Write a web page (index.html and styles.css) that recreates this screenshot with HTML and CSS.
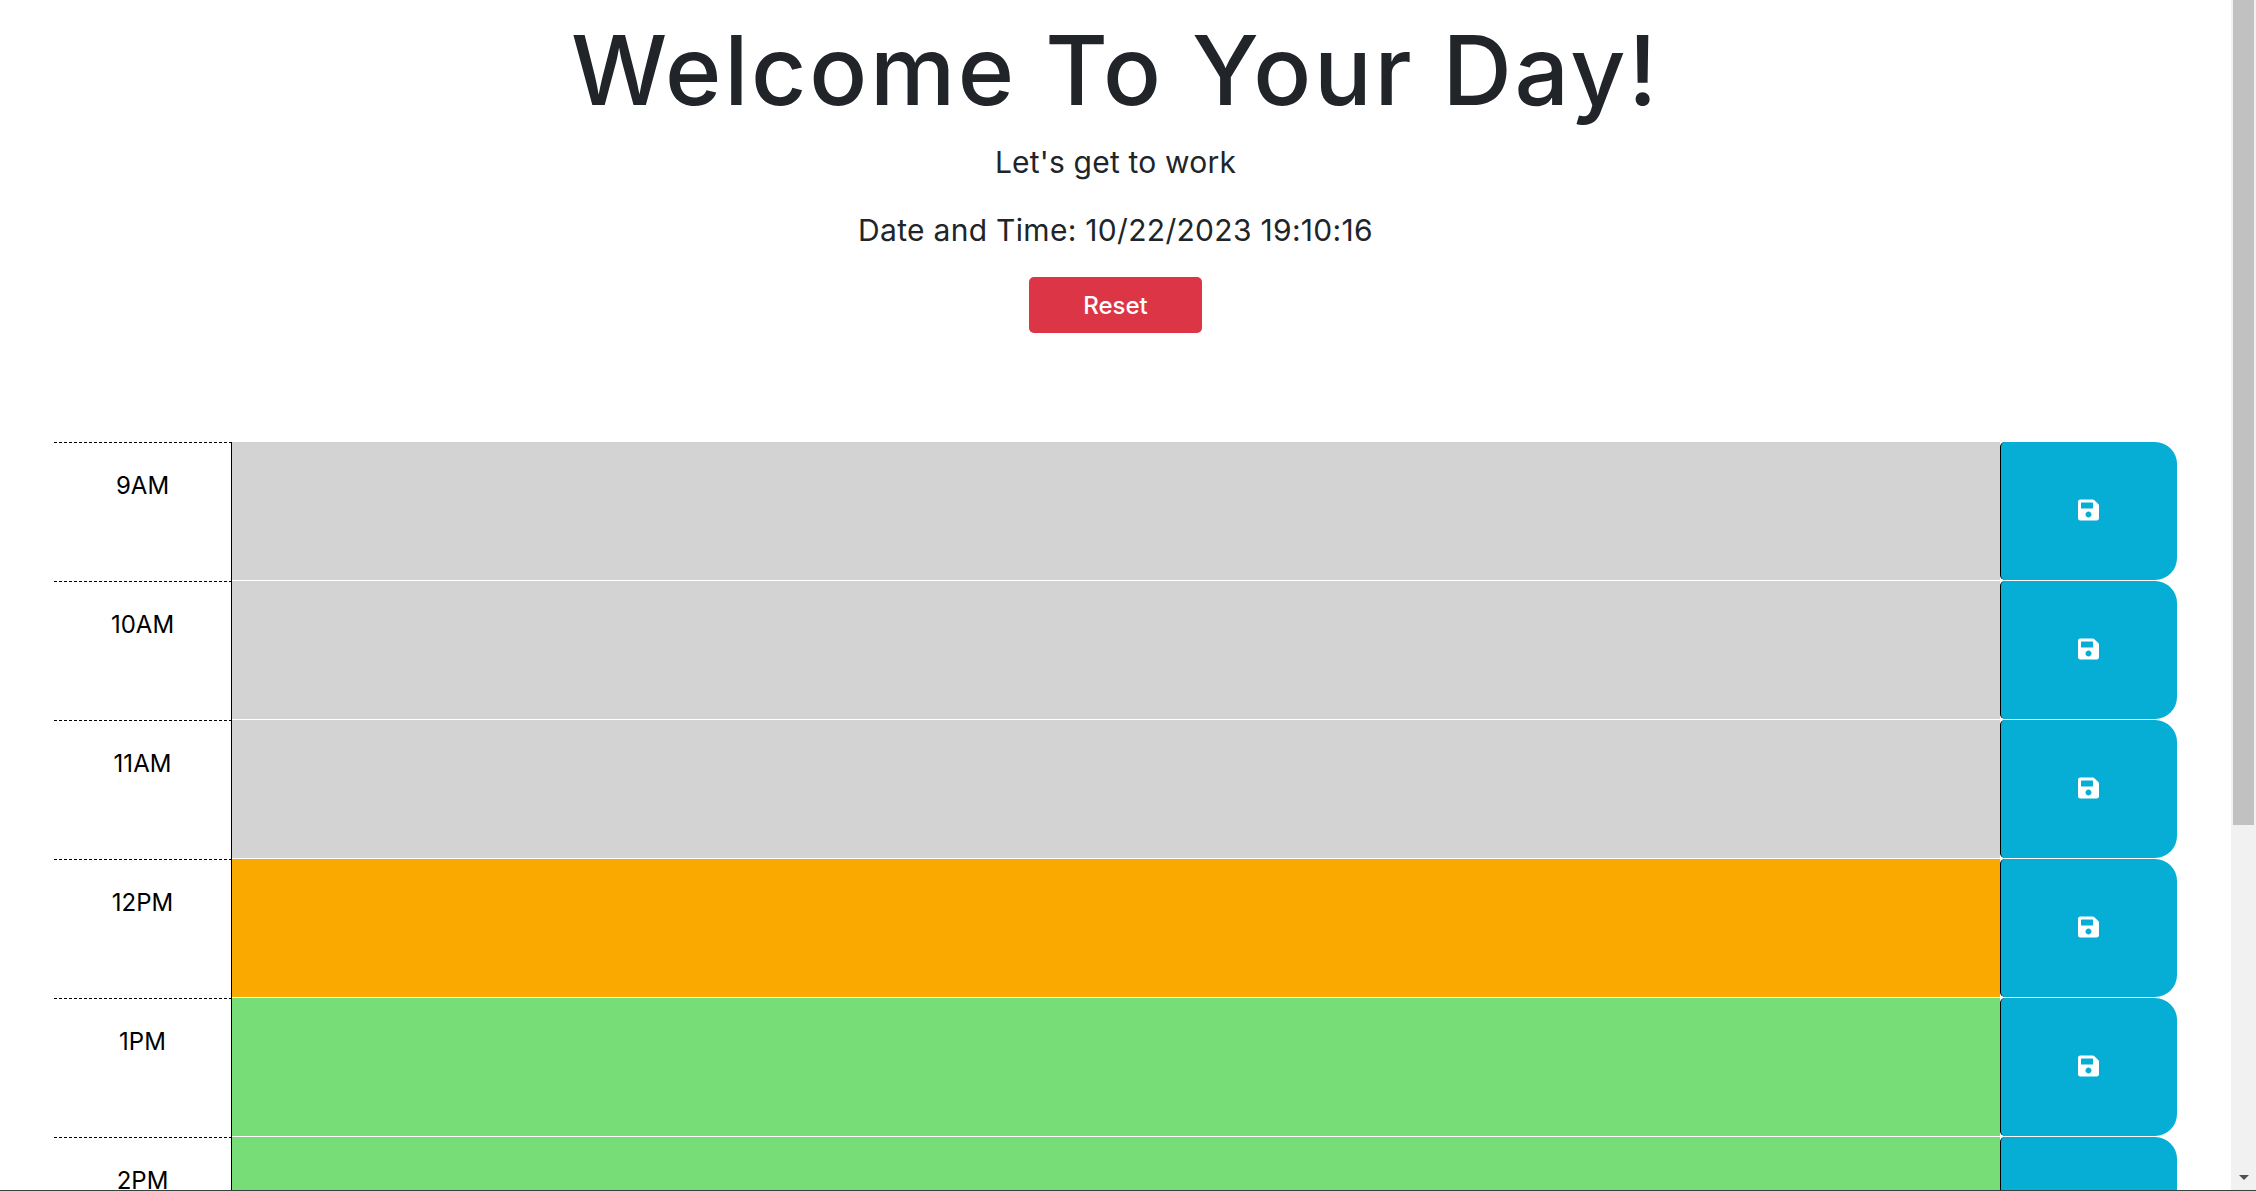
FILE: index.html
```html
<!DOCTYPE html>
<html lang="en">
<head>
    <meta charset="UTF-8">
    <meta name="viewport" content="width=device-width, initial-scale=1.0">
    <title>Work Day Scheduler</title>
    <link rel="stylesheet" href="styles.css">
</head>
<body>
    <div class="page">
        <header class="jumbotron">
            <h1>Welcome To Your Day!</h1>
            <p class="lead">Let's get to work</p>
            <p class="lead clock">Date and Time: 10/22/2023 19:10:16</p>
            <button class="reset-btn">Reset</button>
        </header>

        <div class="schedule">
            <div class="time-block">
                <div class="hour">9AM</div>
                <textarea class="description past"></textarea>
                <button class="save-btn"><svg class="save-icon" viewBox="0 0 448 512"><path d="M433.941 129.941l-83.882-83.882A48 48 0 0 0 316.118 32H48C21.49 32 0 53.49 0 80v352c0 26.51 21.49 48 48 48h352c26.51 0 48-21.49 48-48V163.882a48 48 0 0 0-14.059-33.941zM224 416c-35.346 0-64-28.654-64-64 0-35.346 28.654-64 64-64s64 28.654 64 64c0 35.346-28.654 64-64 64zm96-304.52V212c0 6.627-5.373 12-12 12H76c-6.627 0-12-5.373-12-12V108c0-6.627 5.373-12 12-12h228.52c3.183 0 6.235 1.264 8.485 3.515l3.48 3.48A11.996 11.996 0 0 1 320 111.48z"/></svg></button>
            </div>
            <div class="time-block">
                <div class="hour">10AM</div>
                <textarea class="description past"></textarea>
                <button class="save-btn"><svg class="save-icon" viewBox="0 0 448 512"><path d="M433.941 129.941l-83.882-83.882A48 48 0 0 0 316.118 32H48C21.49 32 0 53.49 0 80v352c0 26.51 21.49 48 48 48h352c26.51 0 48-21.49 48-48V163.882a48 48 0 0 0-14.059-33.941zM224 416c-35.346 0-64-28.654-64-64 0-35.346 28.654-64 64-64s64 28.654 64 64c0 35.346-28.654 64-64 64zm96-304.52V212c0 6.627-5.373 12-12 12H76c-6.627 0-12-5.373-12-12V108c0-6.627 5.373-12 12-12h228.52c3.183 0 6.235 1.264 8.485 3.515l3.48 3.48A11.996 11.996 0 0 1 320 111.48z"/></svg></button>
            </div>
            <div class="time-block">
                <div class="hour">11AM</div>
                <textarea class="description past"></textarea>
                <button class="save-btn"><svg class="save-icon" viewBox="0 0 448 512"><path d="M433.941 129.941l-83.882-83.882A48 48 0 0 0 316.118 32H48C21.49 32 0 53.49 0 80v352c0 26.51 21.49 48 48 48h352c26.51 0 48-21.49 48-48V163.882a48 48 0 0 0-14.059-33.941zM224 416c-35.346 0-64-28.654-64-64 0-35.346 28.654-64 64-64s64 28.654 64 64c0 35.346-28.654 64-64 64zm96-304.52V212c0 6.627-5.373 12-12 12H76c-6.627 0-12-5.373-12-12V108c0-6.627 5.373-12 12-12h228.52c3.183 0 6.235 1.264 8.485 3.515l3.48 3.48A11.996 11.996 0 0 1 320 111.48z"/></svg></button>
            </div>
            <div class="time-block">
                <div class="hour">12PM</div>
                <textarea class="description present"></textarea>
                <button class="save-btn"><svg class="save-icon" viewBox="0 0 448 512"><path d="M433.941 129.941l-83.882-83.882A48 48 0 0 0 316.118 32H48C21.49 32 0 53.49 0 80v352c0 26.51 21.49 48 48 48h352c26.51 0 48-21.49 48-48V163.882a48 48 0 0 0-14.059-33.941zM224 416c-35.346 0-64-28.654-64-64 0-35.346 28.654-64 64-64s64 28.654 64 64c0 35.346-28.654 64-64 64zm96-304.52V212c0 6.627-5.373 12-12 12H76c-6.627 0-12-5.373-12-12V108c0-6.627 5.373-12 12-12h228.52c3.183 0 6.235 1.264 8.485 3.515l3.48 3.48A11.996 11.996 0 0 1 320 111.48z"/></svg></button>
            </div>
            <div class="time-block">
                <div class="hour">1PM</div>
                <textarea class="description future"></textarea>
                <button class="save-btn"><svg class="save-icon" viewBox="0 0 448 512"><path d="M433.941 129.941l-83.882-83.882A48 48 0 0 0 316.118 32H48C21.49 32 0 53.49 0 80v352c0 26.51 21.49 48 48 48h352c26.51 0 48-21.49 48-48V163.882a48 48 0 0 0-14.059-33.941zM224 416c-35.346 0-64-28.654-64-64 0-35.346 28.654-64 64-64s64 28.654 64 64c0 35.346-28.654 64-64 64zm96-304.52V212c0 6.627-5.373 12-12 12H76c-6.627 0-12-5.373-12-12V108c0-6.627 5.373-12 12-12h228.52c3.183 0 6.235 1.264 8.485 3.515l3.48 3.48A11.996 11.996 0 0 1 320 111.48z"/></svg></button>
            </div>
            <div class="time-block">
                <div class="hour">2PM</div>
                <textarea class="description future"></textarea>
                <button class="save-btn"><svg class="save-icon" viewBox="0 0 448 512"><path d="M433.941 129.941l-83.882-83.882A48 48 0 0 0 316.118 32H48C21.49 32 0 53.49 0 80v352c0 26.51 21.49 48 48 48h352c26.51 0 48-21.49 48-48V163.882a48 48 0 0 0-14.059-33.941zM224 416c-35.346 0-64-28.654-64-64 0-35.346 28.654-64 64-64s64 28.654 64 64c0 35.346-28.654 64-64 64zm96-304.52V212c0 6.627-5.373 12-12 12H76c-6.627 0-12-5.373-12-12V108c0-6.627 5.373-12 12-12h228.52c3.183 0 6.235 1.264 8.485 3.515l3.48 3.48A11.996 11.996 0 0 1 320 111.48z"/></svg></button>
            </div>
        </div>
    </div>

    <div class="scrollbar">
        <div class="scroll-thumb"></div>
        <div class="scroll-track"></div>
        <div class="scroll-arrow"></div>
    </div>
</body>
</html>
```

FILE: styles.css
```css
html, body {
    height: 100%;
    margin: 0;
    overflow: hidden;
}
body {
    display: flex;
    font-family: Inter, "Liberation Sans", sans-serif;
    color: #212529;
    background-color: #fff;
    border-bottom: 1px solid #3c4043;
    box-sizing: border-box;
}
.page {
    flex: 1;
    min-width: 0;
    overflow: hidden;
}
.jumbotron {
    height: 442px;
    box-sizing: border-box;
    padding-top: 8px;
    text-align: center;
}
h1 {
    margin: 0 0 8px;
    font-size: 96px;
    font-weight: 500;
    line-height: 124px;
    letter-spacing: 2.7px;
}
.lead {
    margin: 0 0 24px;
    font-size: 30px;
    line-height: 44px;
    letter-spacing: 0.2px;
}
.clock {
    margin-bottom: 25px;
    letter-spacing: 0.3px;
}
.reset-btn {
    width: 173px;
    height: 56px;
    border: none;
    border-radius: 5px;
    background-color: #dc3545;
    color: #fff;
    font-family: inherit;
    font-size: 24px;
    font-weight: 500;
}
.schedule {
    margin: 0 54px;
}
.time-block {
    display: flex;
    height: 139px;
}
.hour {
    width: 178px;
    flex-shrink: 0;
    box-sizing: border-box;
    padding-top: 25px;
    border-top: 1px dashed #000;
    border-right: 1px solid #000;
    color: #000;
    font-size: 24px;
    line-height: 36px;
    text-align: center;
}
.description {
    flex: 1;
    min-width: 0;
    height: 138px;
    padding: 0;
    border: none;
    border-radius: 0;
    resize: none;
}
.past {
    background-color: #d3d3d3;
}
.present {
    background-color: #f9a900;
}
.future {
    background-color: #77dd77;
}
.save-btn {
    display: flex;
    align-items: center;
    justify-content: center;
    width: 177px;
    height: 138px;
    flex-shrink: 0;
    padding: 0 1px 2px 0;
    border: none;
    border-left: 1px solid #000;
    border-radius: 5px 22px 22px 5px;
    background-color: #06aed5;
}
.save-icon {
    width: 21px;
    height: 24px;
    fill: #fff;
}
.scrollbar {
    display: flex;
    flex-direction: column;
    width: 25px;
    flex-shrink: 0;
    background-color: #f1f1f1;
}
.scroll-thumb {
    height: 825px;
    margin: 0 2px;
    background-color: #c1c1c1;
}
.scroll-track {
    flex: 1;
}
.scroll-arrow {
    width: 0;
    height: 0;
    margin: 0 auto 10px;
    border-left: 5px solid transparent;
    border-right: 5px solid transparent;
    border-top: 5px solid #505050;
}
```
